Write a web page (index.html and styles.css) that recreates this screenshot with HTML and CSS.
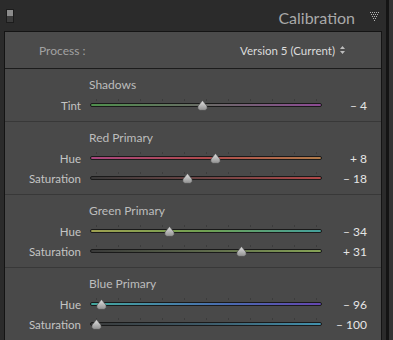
FILE: index.html
```html
<!DOCTYPE html>
<html>
<head>
  <link rel="stylesheet" href="styles.css">
</head>
<body>
  <svg width="0" height="0" class="defs">
    <defs>
      <linearGradient id="knob" x1="0" y1="0" x2="0" y2="1">
        <stop offset="0" stop-color="#e2e2e2"/>
        <stop offset="1" stop-color="#8e8e8e"/>
      </linearGradient>
      <symbol id="thumb" viewBox="0 0 11 11">
        <path d="M5.5 0.5 L9.6 5.6 Q10.4 6.6 10.2 8.2 Q9.8 10.4 7.6 10.4 L3.4 10.4 Q1.2 10.4 0.8 8.2 Q0.6 6.6 1.4 5.6 Z" fill="url(#knob)" stroke="#3a3a3a" stroke-width="0.6"/>
      </symbol>
    </defs>
  </svg>

  <div class="frame">
    <div class="side">
      <div class="header">
        <span class="switch"></span>
        <span class="title">Calibration</span>
        <svg class="collapse" width="9" height="9" viewBox="0 0 9 9">
          <g fill="#b4b4b4">
            <rect x="0" y="0" width="1" height="1"/><rect x="2" y="0" width="1" height="1"/><rect x="4" y="0" width="1" height="1"/><rect x="6" y="0" width="1" height="1"/><rect x="8" y="0" width="1" height="1"/>
            <rect x="1" y="2" width="1" height="1"/><rect x="3" y="2" width="1" height="1"/><rect x="5" y="2" width="1" height="1"/><rect x="7" y="2" width="1" height="1"/>
            <rect x="2" y="4" width="1" height="1"/><rect x="4" y="4" width="1" height="1"/><rect x="6" y="4" width="1" height="1"/>
            <rect x="3" y="6" width="1" height="1"/><rect x="5" y="6" width="1" height="1"/>
            <rect x="4" y="8" width="1" height="1"/>
          </g>
        </svg>
      </div>

      <div class="panel">
        <div class="process">
          <span class="process-label">Process :</span>
          <span class="process-value">Version 5 (Current)
            <svg class="updown" width="5" height="8" viewBox="0 0 5 8">
              <path d="M0 3 L2.5 0 L5 3 Z M0 5 L2.5 8 L5 5 Z" fill="#bdbdbd"/>
            </svg>
          </span>
        </div>

        <div class="group">
          <div class="group-title">Shadows</div>
          <div class="row">
            <span class="label">Tint</span>
            <div class="track tint"><svg class="thumb" style="left:106px"><use href="#thumb"/></svg></div>
            <span class="value">– 4</span>
          </div>
        </div>

        <div class="group">
          <div class="group-title">Red Primary</div>
          <div class="row">
            <span class="label">Hue</span>
            <div class="track red-hue"><svg class="thumb" style="left:119px"><use href="#thumb"/></svg></div>
            <span class="value">+ 8</span>
          </div>
          <div class="row">
            <span class="label">Saturation</span>
            <div class="track red-sat"><svg class="thumb" style="left:91px"><use href="#thumb"/></svg></div>
            <span class="value">– 18</span>
          </div>
        </div>

        <div class="group">
          <div class="group-title">Green Primary</div>
          <div class="row">
            <span class="label">Hue</span>
            <div class="track green-hue"><svg class="thumb" style="left:73px"><use href="#thumb"/></svg></div>
            <span class="value">– 34</span>
          </div>
          <div class="row">
            <span class="label">Saturation</span>
            <div class="track green-sat"><svg class="thumb" style="left:145px"><use href="#thumb"/></svg></div>
            <span class="value">+ 31</span>
          </div>
        </div>

        <div class="group">
          <div class="group-title">Blue Primary</div>
          <div class="row">
            <span class="label">Hue</span>
            <div class="track blue-hue"><svg class="thumb" style="left:5px"><use href="#thumb"/></svg></div>
            <span class="value">– 96</span>
          </div>
          <div class="row">
            <span class="label">Saturation</span>
            <div class="track blue-sat"><svg class="thumb" style="left:0px"><use href="#thumb"/></svg></div>
            <span class="value">– 100</span>
          </div>
        </div>
      </div>
    </div>
    <div class="rail"></div>
    <div class="edge"></div>
  </div>
</body>
</html>
```

FILE: styles.css
```css
body {
  margin: 0;
  background: #2b2b2b;
  font-family: Lato, "Open Sans", sans-serif;
  overflow: hidden;
  height: 340px;
}
.defs {
  position: absolute;
}
.frame {
  display: flex;
  height: 340px;
  overflow: hidden;
}
.side {
  width: 386px;
  background: #2b2b2b;
}
.rail {
  width: 3px;
  background: #141414;
}
.edge {
  flex: 1;
  background: #343434;
}

/* header */
.header {
  display: flex;
  align-items: center;
  height: 31px;
}
.switch {
  box-sizing: border-box;
  width: 8px;
  height: 14px;
  margin-left: 6px;
  margin-top: 1px;
  border: 1px solid #1c1c1c;
  background: linear-gradient(#8c8c8c 0 50%, #3c3c3c 50% 100%);
}
.title {
  margin-left: auto;
  font-size: 16px;
  color: #a9a9a9;
  margin-top: 3px;
}
.collapse {
  margin-left: 15px;
  margin-right: 7px;
  margin-top: 2px;
}

/* panel */
.panel {
  box-sizing: border-box;
  width: 378px;
  margin-left: 4px;
  border: 1px solid #141414;
  border-bottom: none;
  background: #494949;
  height: 309px;
  overflow: hidden;
}
.process {
  display: flex;
  align-items: center;
  height: 36px;
  border-bottom: 1px solid #1c1c1c;
  background: #4b4b4b;
  font-size: 12px;
}
.process-label {
  margin-left: 34px;
  color: #a2a2a2;
}
.process-value {
  margin-left: auto;
  margin-right: 36px;
  color: #dcdcdc;
  font-size: 11.5px;
  display: flex;
  align-items: center;
  gap: 5px;
}
.group {
  padding: 6px 0;
  border-bottom: 1px solid #383838;
}
.group-title {
  height: 20px;
  line-height: 20px;
  padding-left: 84px;
  font-size: 12px;
  color: #bdbdbd;
}
.row {
  display: grid;
  grid-template-columns: 76px 232px 1fr;
  column-gap: 9px;
  align-items: center;
  height: 20px;
  padding-right: 14px;
  font-size: 11.5px;
}
.label {
  text-align: right;
  color: #c4c4c4;
}
.value {
  text-align: right;
  color: #e6e6e6;
  font-size: 12px;
}

/* slider track */
.track {
  position: relative;
  height: 2px;
  border: 1px solid #1a1a1a;
  border-radius: 2px;
}
.track::before {
  content: "";
  position: absolute;
  left: 5px;
  width: 221px;
  top: -5px;
  height: 2px;
  background: repeating-linear-gradient(to right, #3c3c3c 0 1px, transparent 1px 22px);
}
.thumb {
  position: absolute;
  top: -4px;
  width: 11px;
  height: 11px;
}
.tint {
  background: linear-gradient(to right, #4f8f4c, #6a6a66 50%, #8d4b94);
}
.red-hue {
  background: linear-gradient(to right, #a8467e, #b04a4c 50%, #b07c4a);
}
.red-sat {
  background: linear-gradient(to right, #3a3a3a, #6e4444 50%, #b04848);
}
.green-hue {
  background: linear-gradient(to right, #9ea050, #6fa052 50%, #44a09c);
}
.green-sat {
  background: linear-gradient(to right, #3a3a3a, #5e6a4c 50%, #86a356);
}
.blue-hue {
  background: linear-gradient(to right, #43a69c, #4a6ab0 60%, #6446b0);
}
.blue-sat {
  background: linear-gradient(to right, #3a3a3a, #3e5a68 50%, #4292ae);
}
```
